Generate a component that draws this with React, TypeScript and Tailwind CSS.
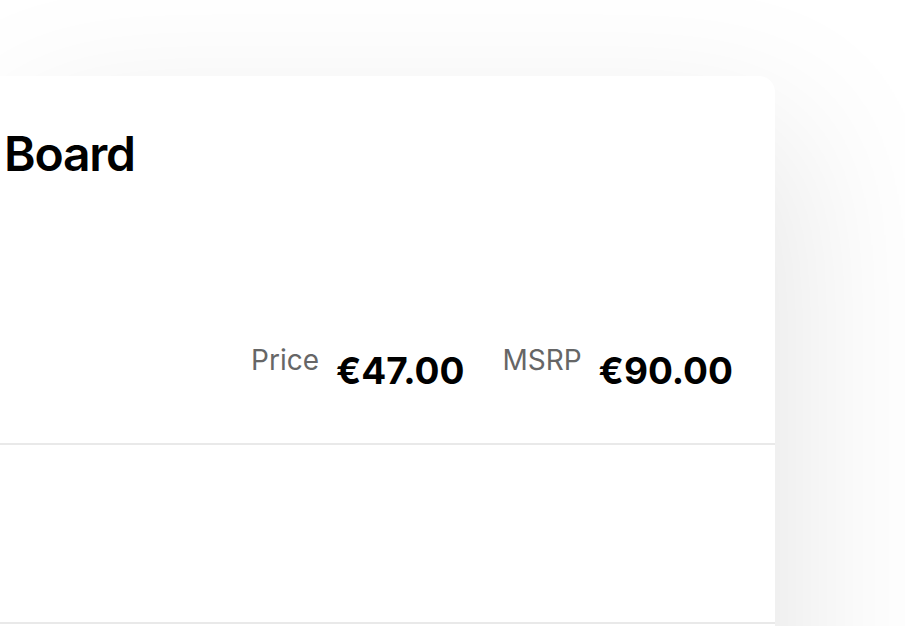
export default function App() {
  const prices = [
    { label: 'Price', value: '€47.00' },
    { label: 'MSRP', value: '€90.00' },
  ]

  return (
    <div className="h-[626px] w-[905px] overflow-hidden bg-white font-['Inter',sans-serif]">
      <div className="pt-[76px]">
        <div className="w-[775px] rounded-tr-2xl bg-white shadow-[20px_50px_160px_rgba(0,0,0,0.1)]">
          {/* product header */}
          <div className="border-b-2 border-[#e9e9e9] pt-[49px] pb-[54px] pl-[4px] pr-[42px]">
            <h1 className="text-[48px] leading-[58px] font-semibold tracking-[-0.025em] text-black">Board</h1>
            <div className="mt-[163px] flex items-start justify-end">
              {prices.map((p, i) => (
                <div key={p.label} className={`flex items-start gap-[17px] ${i > 0 ? 'ml-[38px]' : ''}`}>
                  <span className="text-[28px] leading-[28px] text-[#666666]">{p.label}</span>
                  <span className="mt-[6px] text-[37px] leading-[37px] font-bold text-black">{p.value}</span>
                </div>
              ))}
            </div>
          </div>
          <div className="h-[179px] border-b-2 border-[#e9e9e9]" />
          <div className="h-[200px]" />
        </div>
      </div>
    </div>
  )
}
